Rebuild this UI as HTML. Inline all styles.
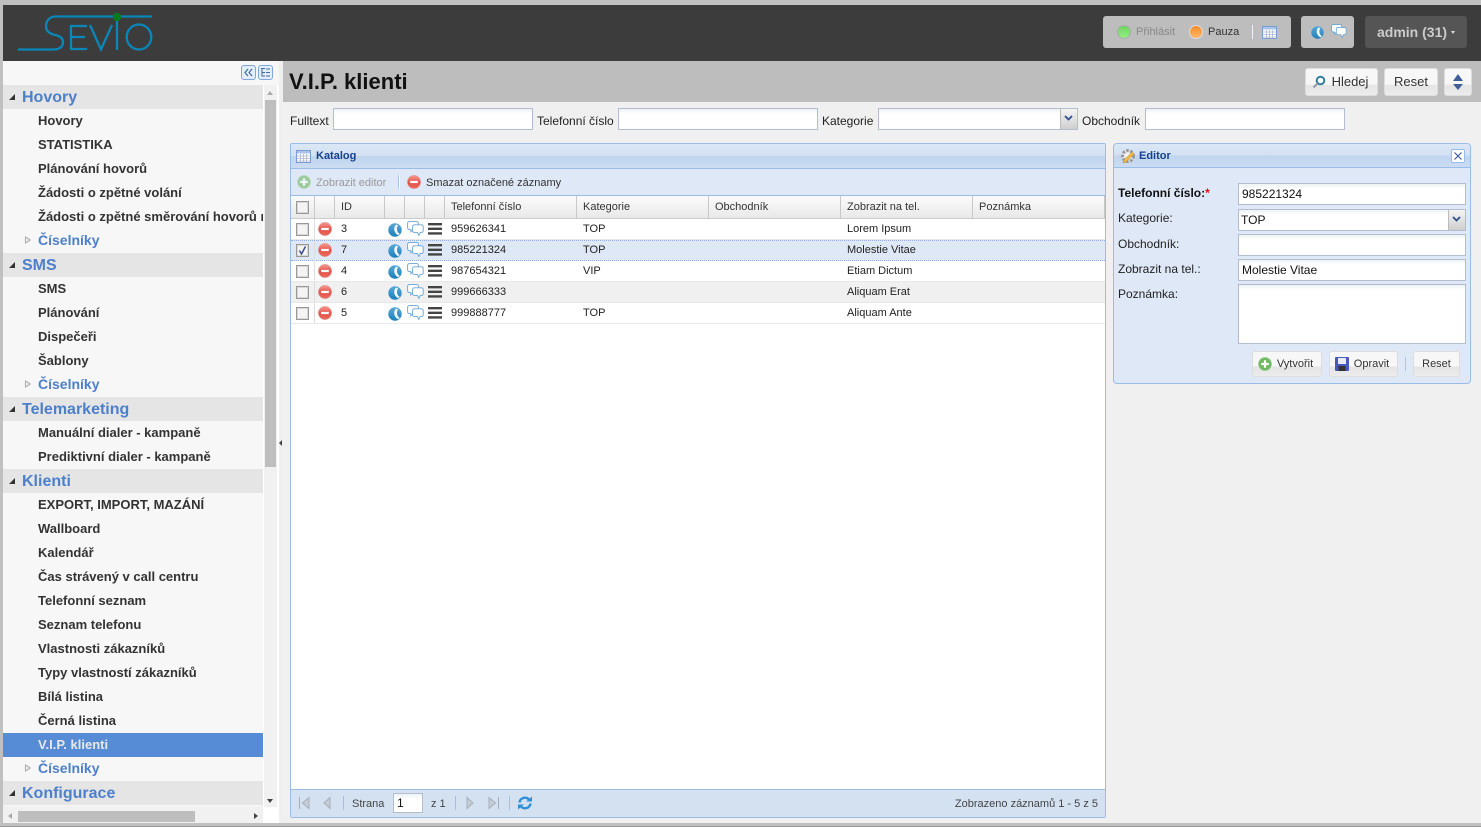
<!DOCTYPE html>
<html><head><meta charset="utf-8"><style>
*{box-sizing:border-box}
html,body{margin:0;padding:0;width:1481px;height:827px;overflow:hidden;background:#c0c0c0;font-family:"Liberation Sans",sans-serif;color:#222}
.a{position:absolute;white-space:nowrap}
.mi{position:absolute;left:3px;width:260px;height:24px;line-height:24px;font-size:13px;font-weight:bold;color:#333;padding-left:35px;white-space:nowrap;overflow:hidden}
.g{position:absolute;left:3px;width:260px;height:24px;line-height:25px;background:#e5e5e5;font-size:16px;font-weight:bold;color:#4d7fcb;padding-left:19px}
.g:before{content:"";position:absolute;left:6px;top:9px;border-style:solid;border-width:0 0 6px 6px;border-color:transparent transparent #333 transparent}
.s{position:absolute;left:3px;width:260px;height:24px;line-height:23px;font-size:14px;font-weight:bold;color:#4d7fcb;padding-left:35px}
.s:before{content:"";position:absolute;left:22px;top:7px;border-style:solid;border-width:4.500px 0 4.500px 6px;border-color:transparent transparent transparent #aaa}
.s:after{content:"";position:absolute;left:23px;top:9px;border-style:solid;border-width:2.500px 0 2.500px 3.500px;border-color:transparent transparent transparent #f7f7f7}
.inp{position:absolute;background:linear-gradient(#eef3f3,#fff 5px);border:1px solid #b4bccf;font-size:12px;line-height:20px;padding-left:3px;color:#111}
.lb{position:absolute;font-size:12px;color:#222;white-space:nowrap}
.btn{position:absolute;border:1px solid #ddd;border-radius:3px;background:linear-gradient(#f7f7f7 0,#f7f7f7 60%,#e4e4e4 61%,#ececec 100%);font-size:13px;color:#333;text-align:center}
.th{position:absolute;top:196px;height:23px;line-height:21px;padding-top:1px;font-size:11px;color:#333;padding-left:6px;border-right:1px solid #c8c8c8;background:linear-gradient(#fbfbfb,#e9e9e9);border-bottom:1px solid #ccc}
.row{position:absolute;left:291px;width:814px;height:21px;border-bottom:1px solid #e8e8e8;font-size:11px;color:#222}
.row span{position:absolute;top:3px;margin-top:1px;white-space:nowrap}
.cb{position:absolute;left:5px;top:4px;width:13px;height:13px;border:1px solid #999;box-shadow:inset 0 0 0 1px #d8d8d8;background:#f4f4f4}
.cs{position:absolute;left:23px;top:0;width:1px;height:20px;background:#ddd}
.ic{position:absolute;overflow:visible}
</style></head><body>
<svg width="0" height="0" style="position:absolute"><defs>
<linearGradient id="rd" x1="0" y1="0" x2="0" y2="1"><stop offset="0" stop-color="#f49a90"/><stop offset=".55" stop-color="#e5524a"/><stop offset="1" stop-color="#ea6a5e"/></linearGradient>
<linearGradient id="bl" x1="0" y1="0" x2="0" y2="1"><stop offset="0" stop-color="#58a9d8"/><stop offset="1" stop-color="#1d7fba"/></linearGradient>
<symbol id="del" viewBox="0 0 14 14"><circle cx="7" cy="7" r="6.6" fill="url(#rd)" stroke="#d99" stroke-width=".6"/><rect x="3.200" y="5.900" width="7.600" height="2.200" fill="#fff"/></symbol>
<symbol id="add" viewBox="0 0 14 14"><circle cx="7" cy="7" r="6.500" fill="#6fb95f" stroke="#9c9" stroke-width=".7"/><path d="M3.200 5.900H5.900V3.200H8.100V5.900H10.800V8.100H8.100V10.800H5.900V8.100H3.200Z" fill="#fff"/></symbol>
<symbol id="phone" viewBox="0 0 14 14"><circle cx="7" cy="7" r="6.700" fill="url(#bl)"/><path d="M8.200 1.600C5.400 3.600 5.200 9.600 10.300 12.300L11.800 10.900C8.800 9.400 8.200 5.200 10 2.300Z" fill="#f2f8fc"/></symbol>
<symbol id="chat" viewBox="0 0 17 15"><path d="M2.500 .6H9.500Q11.400 .6 11.400 2.500V6.500Q11.400 8.600 9.500 8.600H6L3.800 10.800V8.600H2.500Q.6 8.600 .6 6.500V2.500Q.6 .6 2.500 .6Z" fill="#fff" stroke="#6aa5d5" stroke-width=".9"/><path d="M7.500 3.800H14.300Q16.200 3.800 16.200 5.700V9.500Q16.200 11.400 14.300 11.400H13.200L11.800 14.500L10.400 11.400H7.500Q5.600 11.400 5.600 9.500V5.700Q5.600 3.800 7.500 3.800Z" fill="#fff" stroke="#6aa5d5" stroke-width=".9"/></symbol>
<symbol id="menu" viewBox="0 0 14 12"><path d="M0 0H14V2.400H0ZM0 4.600H14V7H0ZM0 9.200H14V11.600H0Z" fill="#444"/></symbol>
<symbol id="tbl" viewBox="0 0 15 13"><rect x=".5" y=".5" width="14" height="12" fill="#fff" stroke="#7a9cd0"/><rect x="1" y="1" width="13" height="2.500" fill="#a9c3ea"/><path d="M1 6H14M1 8.500H14M1 11H14M4.500 4V12M7.500 4V12M10.500 4V12" stroke="#aab8cc" stroke-width=".8"/></symbol>
</defs></svg>

<!-- header -->
<div class="a" style="left:3px;top:5px;width:1478px;height:56px;background:#3c3c3c"></div>
<svg class="a" style="left:17px;top:12px" width="138" height="42" viewBox="0 0 138 42">
<g fill="none" stroke="#0a86b8" stroke-width="2.300">
<path d="M1 37.500H36C43 37.500 46 34.500 46 30C46 26 43 24 38 23C32 21.500 29 19 29 14.500C29 8 33 4.500 39 4.500H135"/>
<path d="M70 14H54V37H70M54 25H68"/>
<path d="M73 13L84 37.500L95 13"/>
<path d="M100 8V38"/>
<ellipse cx="122" cy="25" rx="12.300" ry="12.500"/>
</g>
<circle cx="100" cy="5" r="4.200" fill="#0a7a1e"/>
</svg>
<div class="a" style="left:1103px;top:16px;width:188px;height:32px;background:#bdbdbd;border-radius:3px"></div>
<div class="a" style="left:1117px;top:25px;width:14px;height:14px;border-radius:50%;background:linear-gradient(#6fd45f,#93ee84);border:1px solid #aaa"></div>
<div class="a" style="left:1136px;top:25px;font-size:11px;color:#888;line-height:14px">Přihlásit</div>
<div class="a" style="left:1189px;top:25px;width:14px;height:14px;border-radius:50%;background:linear-gradient(#f58c2a,#ffb66a);border:1px solid #ddd"></div>
<div class="a" style="left:1208px;top:25px;font-size:11px;color:#333;line-height:14px">Pauza</div>
<div class="a" style="left:1252px;top:25px;width:1px;height:14px;background:#e8f2ff"></div>
<svg class="ic" style="left:1262px;top:26px" width="15" height="13"><use href="#tbl"/></svg>
<div class="a" style="left:1301px;top:16px;width:53px;height:32px;background:#bdbdbd;border-radius:3px"></div>
<svg class="ic" style="left:1311px;top:26px" width="13" height="13"><use href="#phone"/></svg>
<svg class="ic" style="left:1331px;top:24px" width="16" height="14"><use href="#chat"/></svg>
<div class="a" style="left:1365px;top:16px;width:102px;height:32px;background:#555;border-radius:3px"></div>
<div class="a" style="left:1377px;top:23px;font-size:14px;font-weight:bold;color:#ccc;line-height:18px">admin (31)</div>
<div class="a" style="left:1451px;top:31px;border-style:solid;border-width:3px 2.500px 0;border-color:#ddd transparent transparent"></div>

<!-- sidebar -->
<div class="a" style="left:3px;top:61px;width:276px;height:762px;background:#f7f7f7"></div>
<div class="a" style="left:263px;top:85px;width:16px;height:738px;background:#fff"></div>
<div class="a" style="left:241px;top:65px;width:15px;height:15px;border:1px solid #7fa6e0;border-radius:3px;background:#e2eefc"></div>
<svg class="ic" style="left:241px;top:65px" width="15" height="15"><path d="M7 4L4 7.500L7 11M11 4L8 7.500L11 11" fill="none" stroke="#44699f" stroke-width="1.200"/></svg>
<div class="a" style="left:258px;top:65px;width:15px;height:15px;border:1px solid #7fa6e0;border-radius:3px;background:#e2eefc"></div>
<svg class="ic" style="left:258px;top:65px" width="15" height="15"><path d="M3 3.500H7M4 3.500V11H7M4 7.500H7M8 4H12M8 7.500H12M8 11H12" fill="none" stroke="#44699f"/></svg>
<div class="g" style="top:85px">Hovory</div>
<div class="mi" style="top:109px">Hovory</div>
<div class="mi" style="top:133px">STATISTIKA</div>
<div class="mi" style="top:157px">Plánování hovorů</div>
<div class="mi" style="top:181px">Žádosti o zpětné volání</div>
<div class="mi" style="top:205px">Žádosti o zpětné směrování hovorů na</div>
<div class="s" style="top:229px">Číselníky</div>
<div class="g" style="top:253px">SMS</div>
<div class="mi" style="top:277px">SMS</div>
<div class="mi" style="top:301px">Plánování</div>
<div class="mi" style="top:325px">Dispečeři</div>
<div class="mi" style="top:349px">Šablony</div>
<div class="s" style="top:373px">Číselníky</div>
<div class="g" style="top:397px">Telemarketing</div>
<div class="mi" style="top:421px">Manuální dialer - kampaně</div>
<div class="mi" style="top:445px">Prediktivní dialer - kampaně</div>
<div class="g" style="top:469px">Klienti</div>
<div class="mi" style="top:493px">EXPORT, IMPORT, MAZÁNÍ</div>
<div class="mi" style="top:517px">Wallboard</div>
<div class="mi" style="top:541px">Kalendář</div>
<div class="mi" style="top:565px">Čas strávený v call centru</div>
<div class="mi" style="top:589px">Telefonní seznam</div>
<div class="mi" style="top:613px">Seznam telefonu</div>
<div class="mi" style="top:637px">Vlastnosti zákazníků</div>
<div class="mi" style="top:661px">Typy vlastností zákazníků</div>
<div class="mi" style="top:685px">Bílá listina</div>
<div class="mi" style="top:709px">Černá listina</div>
<div class="mi" style="top:733px;background:#558cd5;color:#e8e8e8">V.I.P. klienti</div>
<div class="s" style="top:757px">Číselníky</div>
<div class="g" style="top:781px">Konfigurace</div>
<!-- sidebar scrollbars -->
<div class="a" style="left:264px;top:85px;width:13px;height:722px;background:#f1f1f1"></div>
<div class="a" style="left:265px;top:100px;width:11px;height:367px;background:#bebebe"></div>
<div class="a" style="left:267px;top:91px;border-style:solid;border-width:0 3.500px 4px;border-color:transparent transparent #aaa"></div>
<div class="a" style="left:267px;top:799px;border-style:solid;border-width:4px 3.500px 0;border-color:#444 transparent transparent"></div>
<div class="a" style="left:3px;top:806px;width:260px;height:17px;background:#f1f1f1"></div>
<div class="a" style="left:18px;top:811px;width:177px;height:11px;background:#bebebe"></div>
<div class="a" style="left:8px;top:813px;border-style:solid;border-width:3.500px 4px 3.500px 0;border-color:transparent #aaa transparent transparent"></div>
<div class="a" style="left:254px;top:813px;border-style:solid;border-width:3.500px 0 3.500px 4px;border-color:transparent transparent transparent #444"></div>
<!-- splitter -->
<div class="a" style="left:279px;top:61px;width:4px;height:762px;background:#efefef"></div>
<div class="a" style="left:279px;top:440px;border-style:solid;border-width:3px 3px 3px 0;border-color:transparent #444 transparent transparent"></div>

<!-- main -->
<div class="a" style="left:283px;top:61px;width:1198px;height:41px;background:#bdbdbd"></div>
<div class="a" style="left:283px;top:102px;width:1198px;height:721px;background:#f0f0f0"></div>
<div class="a" style="left:289px;top:68px;font-size:22px;font-weight:bold;color:#111;line-height:27px">V.I.P. klienti</div>
<div class="btn" style="left:1305px;top:68px;width:73px;height:28px;line-height:26px;padding-left:17px">Hledej</div>
<svg class="ic" style="left:1312px;top:75px" width="14" height="14"><circle cx="8.500" cy="5.500" r="3.800" fill="#fff" stroke="#2f7f9f" stroke-width="2"/><path d="M5.500 8.500L1.500 12.500" stroke="#99a" stroke-width="2"/></svg>
<div class="btn" style="left:1384px;top:68px;width:54px;height:28px;line-height:26px">Reset</div>
<div class="btn" style="left:1444px;top:68px;width:28px;height:28px"></div>
<div class="a" style="left:1453px;top:74px;border-style:solid;border-width:0 5px 7px;border-color:transparent transparent #3f5e96"></div>
<div class="a" style="left:1453px;top:84px;border-style:solid;border-width:6px 5px 0;border-color:#3f5e96 transparent transparent"></div>

<!-- filters -->
<div class="lb" style="left:290px;top:114px">Fulltext</div>
<div class="inp" style="left:333px;top:108px;width:200px;height:22px"></div>
<div class="lb" style="left:537px;top:114px">Telefonní číslo</div>
<div class="inp" style="left:618px;top:108px;width:200px;height:22px"></div>
<div class="lb" style="left:822px;top:114px">Kategorie</div>
<div class="inp" style="left:878px;top:108px;width:200px;height:22px"></div>
<div class="a" style="left:1060px;top:109px;width:17px;height:20px;background:linear-gradient(#f4f4f4,#cfcfcf);border-left:1px solid #bbb"></div>
<svg class="ic" style="left:1064px;top:115px" width="9" height="6"><path d="M1 1L4.500 4.500L8 1" fill="none" stroke="#2f4f8f" stroke-width="1.800"/></svg>
<div class="lb" style="left:1082px;top:114px">Obchodník</div>
<div class="inp" style="left:1145px;top:108px;width:200px;height:22px"></div>

<!-- Katalog panel -->
<div class="a" style="left:290px;top:143px;width:816px;height:675px;background:#fff;border:1px solid #99bce8;border-radius:2px"></div>
<div class="a" style="left:291px;top:144px;width:814px;height:25px;background:linear-gradient(#dae7f6 0,#d3e1f3 50%,#bfd4ee 50%,#cbdcf2 100%);border-bottom:1px solid #99bce8"></div>
<svg class="ic" style="left:296px;top:150px" width="15" height="13"><use href="#tbl"/></svg>
<div class="a" style="left:316px;top:150px;font-size:11px;font-weight:bold;color:#15428b;line-height:13px">Katalog</div>
<div class="a" style="left:291px;top:169px;width:814px;height:27px;background:#dfe8f6;border-bottom:1px solid #99bce8"></div>
<svg class="ic" style="left:297px;top:175px" width="14" height="14" opacity=".6"><use href="#add"/></svg>
<div class="a" style="left:316px;top:177px;font-size:11px;color:#999;line-height:13px">Zobrazit editor</div>
<div class="a" style="left:398px;top:175px;width:2px;height:14px;background:#fff;border-left:1px solid #a9c5ea"></div>
<svg class="ic" style="left:407px;top:175px" width="14" height="14"><use href="#del"/></svg>
<div class="a" style="left:426px;top:177px;font-size:11px;color:#333;line-height:13px">Smazat označené záznamy</div>

<div class="th" style="left:291px;width:24px"></div>
<div class="a" style="left:296px;top:201px;width:13px;height:13px;border:1px solid #999;box-shadow:inset 0 0 0 1px #d8d8d8;background:#f4f4f4"></div>
<div class="th" style="left:315px;width:20px"></div>
<div class="th" style="left:335px;width:50px">ID</div>
<div class="th" style="left:385px;width:20px"></div>
<div class="th" style="left:405px;width:20px"></div>
<div class="th" style="left:425px;width:20px"></div>
<div class="th" style="left:445px;width:132px">Telefonní číslo</div>
<div class="th" style="left:577px;width:132px">Kategorie</div>
<div class="th" style="left:709px;width:132px">Obchodník</div>
<div class="th" style="left:841px;width:132px">Zobrazit na tel.</div>
<div class="th" style="left:973px;width:132px">Poznámka</div>

<div class="row" style="top:219px"><div class="cb"></div><div class="cs"></div><span style="left:50px">3</span><span style="left:160px">959626341</span><span style="left:292px">TOP</span><span style="left:556px">Lorem Ipsum</span></div>
<div class="row" style="top:240px;background:#dfe8f6;border-top:1px dotted #8fb0e0;border-bottom:1px dotted #8fb0e0"><div class="cb" style="top:3px"></div><div class="cs"></div><svg class="ic" style="left:5px;top:3px" width="13" height="13"><path d="M3.500 6.500L5.500 10L9.500 2.500" fill="none" stroke="#3a4f8a" stroke-width="1.500"/></svg><span style="left:50px;top:2px">7</span><span style="left:160px;top:2px">985221324</span><span style="left:292px;top:2px">TOP</span><span style="left:556px;top:2px">Molestie Vitae</span></div>
<div class="row" style="top:261px"><div class="cb"></div><div class="cs"></div><span style="left:50px">4</span><span style="left:160px">987654321</span><span style="left:292px">VIP</span><span style="left:556px">Etiam Dictum</span></div>
<div class="row" style="top:282px;background:#f0f0f0"><div class="cb"></div><div class="cs"></div><span style="left:50px">6</span><span style="left:160px">999666333</span><span style="left:556px">Aliquam Erat</span></div>
<div class="row" style="top:303px"><div class="cb"></div><div class="cs"></div><span style="left:50px">5</span><span style="left:160px">999888777</span><span style="left:292px">TOP</span><span style="left:556px">Aliquam Ante</span></div>

<svg class="ic" style="left:318px;top:222px" width="14" height="14"><use href="#del"/></svg>
<svg class="ic" style="left:318px;top:243px" width="14" height="14"><use href="#del"/></svg>
<svg class="ic" style="left:318px;top:264px" width="14" height="14"><use href="#del"/></svg>
<svg class="ic" style="left:318px;top:285px" width="14" height="14"><use href="#del"/></svg>
<svg class="ic" style="left:318px;top:306px" width="14" height="14"><use href="#del"/></svg>
<svg class="ic" style="left:388px;top:223px" width="14" height="14"><use href="#phone"/></svg>
<svg class="ic" style="left:388px;top:244px" width="14" height="14"><use href="#phone"/></svg>
<svg class="ic" style="left:388px;top:265px" width="14" height="14"><use href="#phone"/></svg>
<svg class="ic" style="left:388px;top:286px" width="14" height="14"><use href="#phone"/></svg>
<svg class="ic" style="left:388px;top:307px" width="14" height="14"><use href="#phone"/></svg>
<svg class="ic" style="left:407px;top:221px" width="17" height="15"><use href="#chat"/></svg>
<svg class="ic" style="left:407px;top:242px" width="17" height="15"><use href="#chat"/></svg>
<svg class="ic" style="left:407px;top:263px" width="17" height="15"><use href="#chat"/></svg>
<svg class="ic" style="left:407px;top:284px" width="17" height="15"><use href="#chat"/></svg>
<svg class="ic" style="left:407px;top:305px" width="17" height="15"><use href="#chat"/></svg>
<svg class="ic" style="left:428px;top:223px" width="14" height="12"><use href="#menu"/></svg>
<svg class="ic" style="left:428px;top:244px" width="14" height="12"><use href="#menu"/></svg>
<svg class="ic" style="left:428px;top:265px" width="14" height="12"><use href="#menu"/></svg>
<svg class="ic" style="left:428px;top:286px" width="14" height="12"><use href="#menu"/></svg>
<svg class="ic" style="left:428px;top:307px" width="14" height="12"><use href="#menu"/></svg>

<!-- pager -->
<div class="a" style="left:291px;top:789px;width:814px;height:28px;background:#d3e1f1;border-top:1px solid #99bce8"></div>
<svg class="ic" style="left:298px;top:796px" width="12" height="14"><path d="M1.500 1V13M11 1.500L4.500 7L11 12.500Z" fill="#c5cdd8" stroke="#a9aeb6"/></svg>
<svg class="ic" style="left:323px;top:796px" width="8" height="14"><path d="M7 1.500L1 7L7 12.500Z" fill="#c5cdd8" stroke="#a9aeb6"/></svg>
<div class="a" style="left:343px;top:796px;width:1px;height:14px;background:#9fc0ea"></div>
<div class="a" style="left:352px;top:797px;margin-top:1px;font-size:11px;color:#444;line-height:13px">Strana</div>
<div class="inp" style="left:393px;top:793px;width:30px;height:20px;line-height:18px;font-size:12px;padding-left:3px">1</div>
<div class="a" style="left:431px;top:797px;margin-top:1px;font-size:11px;color:#444;line-height:13px">z 1</div>
<div class="a" style="left:455px;top:796px;width:1px;height:14px;background:#9fc0ea"></div>
<svg class="ic" style="left:466px;top:796px" width="8" height="14"><path d="M1 1.500L7 7L1 12.500Z" fill="#c5cdd8" stroke="#a9aeb6"/></svg>
<svg class="ic" style="left:488px;top:796px" width="12" height="14"><path d="M10.500 1V13M1 1.500L7.500 7L1 12.500Z" fill="#c5cdd8" stroke="#a9aeb6"/></svg>
<div class="a" style="left:509px;top:796px;width:1px;height:14px;background:#9fc0ea"></div>
<svg class="ic" style="left:518px;top:796px" width="14" height="14"><path d="M1.500 6.500A5.500 5.500 0 0 1 11 3.500M12.500 7.500A5.500 5.500 0 0 1 3 10.500" fill="none" stroke="#2f8fd8" stroke-width="2.400"/><path d="M8 5.500H14V.5ZM6 8.500H0V13.500Z" fill="#2f8fd8"/></svg>
<div class="a" style="right:383px;top:798px;font-size:11px;color:#444;line-height:13px">Zobrazeno záznamů 1 - 5 z 5</div>

<!-- editor -->
<div class="a" style="left:1113px;top:143px;width:358px;height:241px;background:#dfe8f6;border:1px solid #99bce8;border-radius:4px"></div>
<div class="a" style="left:1114px;top:144px;width:356px;height:24px;border-radius:3px 3px 0 0;background:linear-gradient(#dae7f6 0,#d3e1f3 50%,#bfd4ee 50%,#cbdcf2 100%);border-bottom:1px solid #99bce8"></div>
<svg class="ic" style="left:1120px;top:148px" width="16" height="17"><circle cx="8" cy="8" r="5.500" fill="#e8e8e8" stroke="#999" stroke-width="3" stroke-dasharray="2.500 1.500"/><circle cx="8" cy="8" r="3" fill="#f4f4f4"/><path d="M14 6L6 14L3 15L4 12L12 4Z" fill="#efb94a" stroke="#b98a2a" stroke-width=".5"/></svg>
<div class="a" style="left:1139px;top:150px;font-size:11px;font-weight:bold;color:#15428b;line-height:13px">Editor</div>
<div class="a" style="left:1451px;top:149px;width:14px;height:14px;background:#fff;border:1px solid #99bce8;border-radius:2px"></div>
<svg class="ic" style="left:1451px;top:149px" width="14" height="14"><path d="M3.500 3.500L10.500 10.500M10.500 3.500L3.500 10.500" stroke="#3f5e96" stroke-width="1.200"/></svg>

<div class="lb" style="left:1118px;top:186px;font-weight:bold;color:#111">Telefonní číslo:<span style="color:#e01010">*</span></div>
<div class="inp" style="left:1238px;top:183px;width:228px;height:22px">985221324</div>
<div class="lb" style="left:1118px;top:211px">Kategorie:</div>
<div class="inp" style="left:1238px;top:209px;width:228px;height:22px;padding-left:2px">TOP</div>
<div class="a" style="left:1448px;top:210px;width:17px;height:20px;background:linear-gradient(#f4f4f4,#cfcfcf);border-left:1px solid #bbb"></div>
<svg class="ic" style="left:1452px;top:216px" width="9" height="6"><path d="M1 1L4.500 4.500L8 1" fill="none" stroke="#2f4f8f" stroke-width="1.800"/></svg>
<div class="lb" style="left:1118px;top:237px">Obchodník:</div>
<div class="inp" style="left:1238px;top:234px;width:228px;height:22px"></div>
<div class="lb" style="left:1118px;top:262px">Zobrazit na tel.:</div>
<div class="inp" style="left:1238px;top:259px;width:228px;height:22px">Molestie Vitae</div>
<div class="lb" style="left:1118px;top:287px">Poznámka:</div>
<div class="inp" style="left:1238px;top:284px;width:228px;height:60px"></div>

<div class="btn" style="left:1252px;top:351px;width:70px;height:26px;line-height:25px;font-size:11px;padding-left:16px">Vytvořit</div>
<svg class="ic" style="left:1258px;top:357px" width="14" height="14"><use href="#add"/></svg>
<div class="btn" style="left:1329px;top:351px;width:69px;height:26px;line-height:25px;font-size:11px;padding-left:16px">Opravit</div>
<svg class="ic" style="left:1335px;top:357px" width="14" height="14"><rect width="14" height="14" rx="1" fill="#4a58b8"/><rect x="3" y="1" width="8" height="6" fill="#e8ecf8"/><rect x="3.500" y="9" width="7" height="5" fill="#333"/></svg>
<div class="a" style="left:1405px;top:357px;width:1px;height:14px;background:#a9c5ea"></div>
<div class="btn" style="left:1413px;top:351px;width:47px;height:26px;line-height:25px;font-size:11px">Reset</div>

<div class="a" style="left:0;top:823px;width:1481px;height:4px;background:#c0c0c0;border-bottom:1px solid #999"></div>
</body></html>
